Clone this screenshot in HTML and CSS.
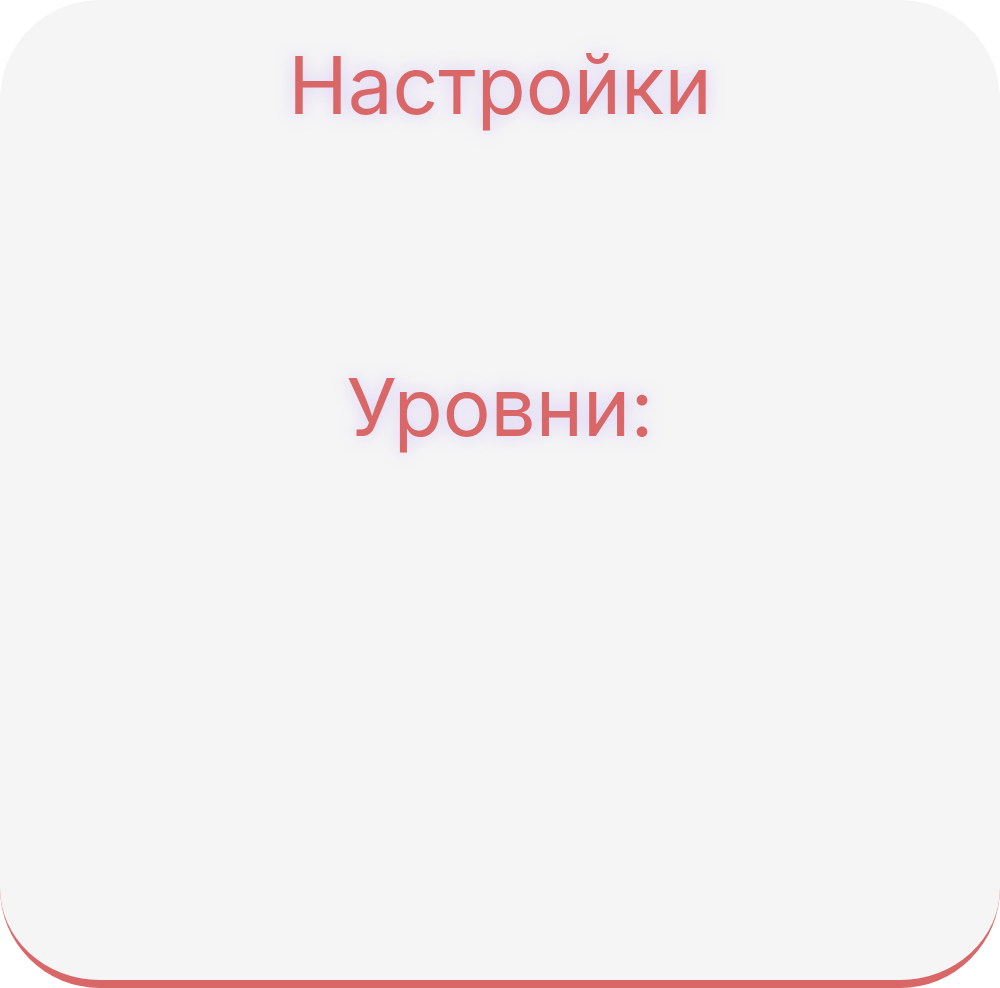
FILE: index.html
```html
<!DOCTYPE html>
<html lang="ru">
<head>
<meta charset="utf-8">
<title>Настройки</title>
<link rel="stylesheet" href="styles.css">
</head>
<body>
<main class="card">
  <h1 class="title">Настройки</h1>
  <h2 class="levels">Уровни:</h2>
</main>
</body>
</html>
```
FILE: styles.css
```css
html, body {
  margin: 0;
  padding: 0;
  background: #ffffff;
}
body {
  font-family: Inter, "Noto Sans", sans-serif;
}
.card {
  box-sizing: border-box;
  width: 1000px;
  height: 988px;
  background: #f5f5f5;
  border-radius: 100px;
  border-bottom: 8px solid #da6767;
  display: flex;
  flex-direction: column;
  align-items: center;
  padding-top: 36px;
}
.title, .levels {
  margin: 0;
  font-size: 80px;
  font-weight: 400;
  line-height: normal;
  color: #da6767;
  text-shadow: 0 0 18px rgba(160, 120, 255, 0.35);
}
.levels {
  margin-top: 225px;
}
```
